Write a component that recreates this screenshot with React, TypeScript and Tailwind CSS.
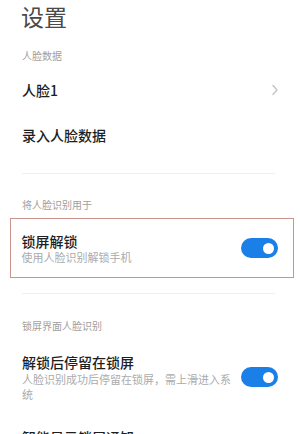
import React from "react";

const font = { fontFamily: '"Noto Sans CJK SC", "Noto Sans", sans-serif' };

function Toggle() {
  return (
    <div className="w-[37px] h-[20px] rounded-full bg-[#1a80e8] flex items-center justify-end pr-[4px] shrink-0">
      <div className="w-[11px] h-[11px] rounded-full bg-white" />
    </div>
  );
}

export default function App() {
  return (
    <div className="w-[300px] h-[434px] bg-white overflow-hidden" style={font}>
      <div className="h-[32px] pl-[21px] flex items-center text-[23px] leading-[32px] text-[#4a4a4a]">设置</div>
      <div className="mt-[16px] h-[15px] pl-[22px] flex items-center text-[10px] text-[#a0a0a0]">人脸数据</div>
      <div className="mt-[5px] h-[44px] px-[22px] flex items-center justify-between">
        <span className="text-[14px] font-medium text-[#1e1e1e]">人脸1</span>
        <svg width="8" height="12" viewBox="0 0 8 12" className="mr-[-1px]">
          <polyline points="2,1.5 6,6 2,10.5" fill="none" stroke="#c4c4c4" strokeWidth="1.4" strokeLinecap="round" strokeLinejoin="round" />
        </svg>
      </div>
      <div className="mt-[1px] h-[44px] px-[22px] flex items-center">
        <span className="text-[14px] font-medium text-[#1e1e1e]">录入人脸数据</span>
      </div>
      <div className="mt-[16px] ml-[22px] w-[253px] h-px bg-[#f0f0f0]" />
      <div className="mt-[23px] h-[15px] pl-[22px] flex items-center text-[10px] text-[#a0a0a0]">将人脸识别用于</div>
      <div className="mt-[6px] ml-[10px] mr-[6px] h-[60px] border-[1.5px] border-[#c9948c] pl-[10.5px] pr-[15.5px] flex items-center justify-between">
        <div className="flex flex-col">
          <span className="text-[14px] leading-[18px] font-medium text-[#1e1e1e]">锁屏解锁</span>
          <span className="text-[11px] leading-[15px] text-[#ababab]">使用人脸识别解锁手机</span>
        </div>
        <Toggle />
      </div>
      <div className="mt-[15px] ml-[22px] w-[253px] h-px bg-[#f0f0f0]" />
      <div className="mt-[24px] h-[15px] pl-[22px] flex items-center text-[10px] text-[#a0a0a0]">锁屏界面人脸识别</div>
      <div className="mt-[19px] px-[22px] flex items-center justify-between">
        <div className="flex flex-col">
          <span className="text-[14px] leading-[20px] font-medium text-[#1e1e1e]">解锁后停留在锁屏</span>
          <span className="w-[212px] text-[11px] leading-[15px] text-[#ababab]">人脸识别成功后停留在锁屏，需上滑进入系统</span>
        </div>
        <Toggle />
      </div>
      <div className="mt-[22px] px-[22px]">
        <span className="text-[14px] leading-[20px] font-medium text-[#1e1e1e]">智能显示锁屏通知</span>
      </div>
    </div>
  );
}
